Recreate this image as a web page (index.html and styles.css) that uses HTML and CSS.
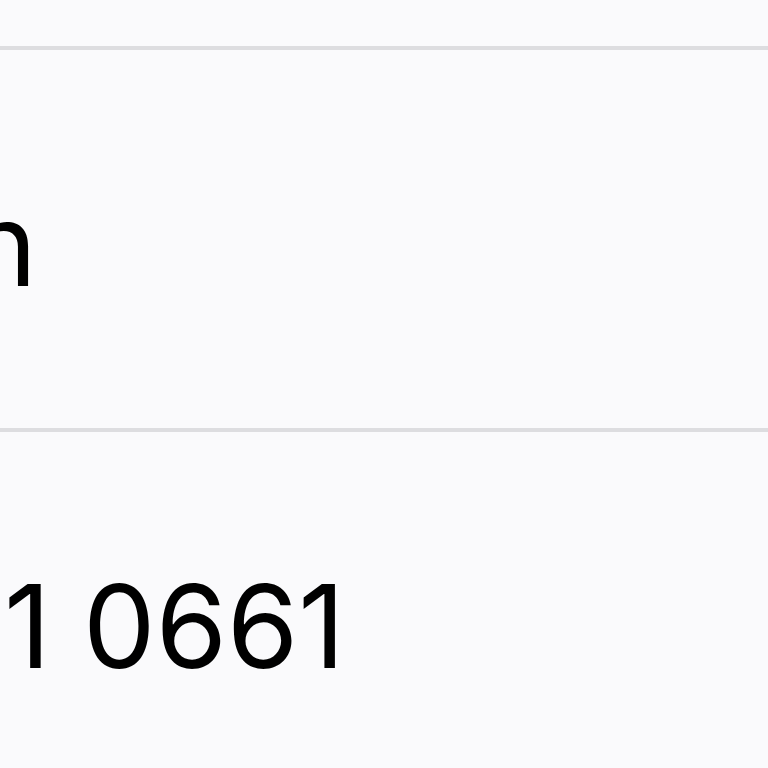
FILE: index.html
```html
<!DOCTYPE html>
<html>
<head>
<meta charset="utf-8">
<link rel="stylesheet" href="styles.css">
</head>
<body>
<div class="list">
  <div class="row">
    <span class="label label-cut">n</span>
  </div>
  <div class="row row-last">
    <span class="label">1 0661</span>
  </div>
</div>
</body>
</html>
```
FILE: styles.css
```css
html, body {
  margin: 0;
  padding: 0;
  background: #fafafc;
  overflow: hidden;
}
.list {
  padding-top: 46px;
  width: 768px;
  height: 768px;
  box-sizing: border-box;
  overflow: hidden;
}
.row {
  border-top: 4px solid #dddde0;
  height: 368px;
  padding-top: 10px;
  display: flex;
  align-items: center;
}
.row-last {
  height: 368px;
}
.label {
  font-family: Inter, "Noto Sans", sans-serif;
  font-size: 115px;
  line-height: 1;
  color: #000;
  white-space: nowrap;
  margin-left: 4px;
}
.label-cut {
  margin-left: -31px;
}
```
